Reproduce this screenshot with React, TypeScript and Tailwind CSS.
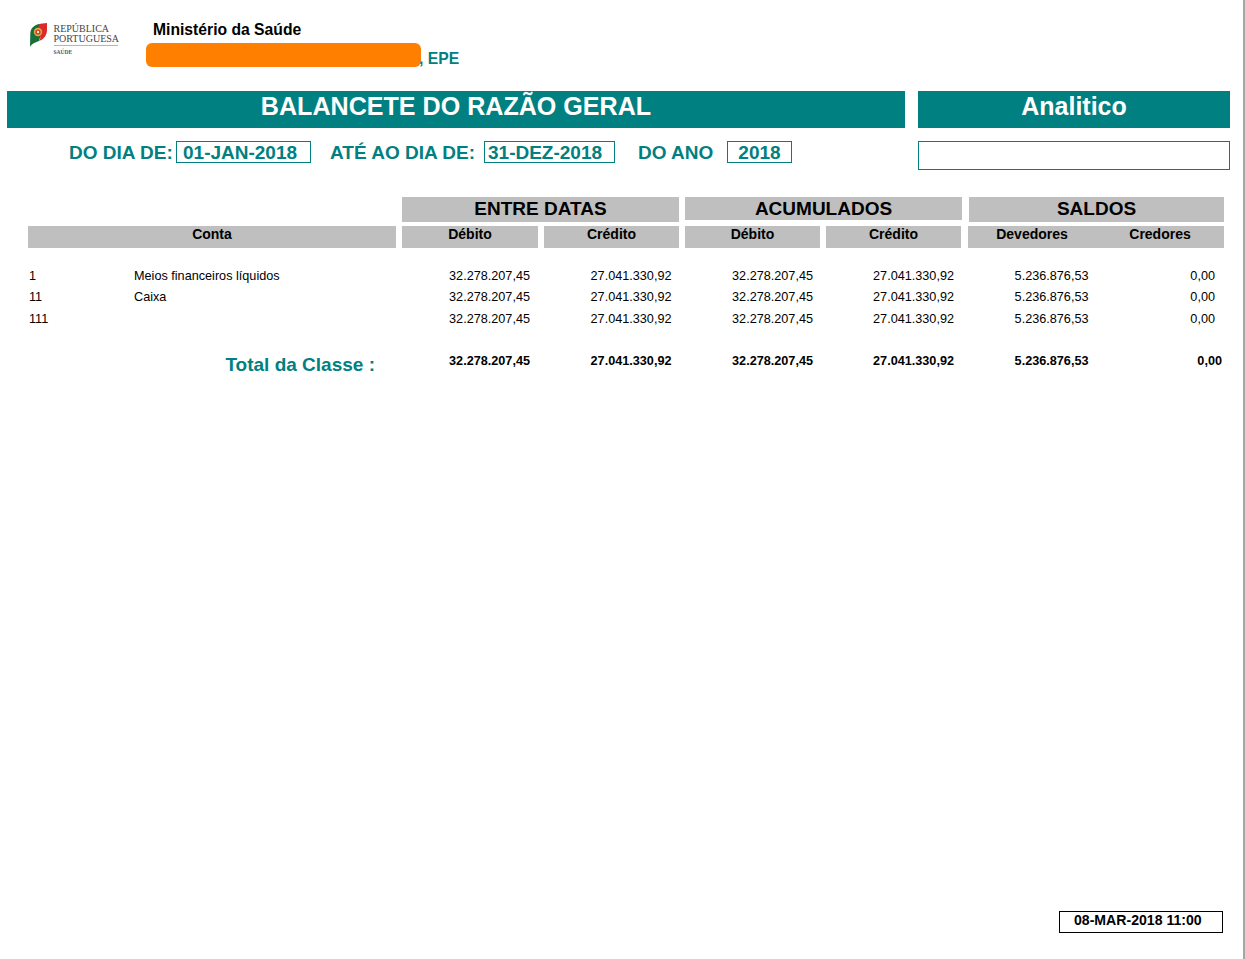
const ROWS = [
  { code: "1", name: "Meios financeiros líquidos" },
  { code: "11", name: "Caixa" },
  { code: "111", name: "" },
];

const VALUES = [
  { value: "32.278.207,45", width: "w-[128px]" },
  { value: "27.041.330,92", width: "w-[141.5px]" },
  { value: "32.278.207,45", width: "w-[141.5px]" },
  { value: "27.041.330,92", width: "w-[141px]" },
  { value: "5.236.876,53", width: "w-[134.5px]" },
];

function Logo() {
  return (
    <div className="ml-[30px] mt-[23px] flex w-[88px] items-start">
      <svg width="17" height="24" viewBox="0 0 17 24" className="shrink-0">
        <path d="M9 1C4 2.2 .5 5.5 .3 10.5L0 24C1.5 21.5 3.5 20 9 18C9 18 12 12 9 1Z" fill="#17703a" />
        <path d="M17 0C13.5 .2 11 .5 9 1C8 6 8.5 9 9.5 12C11 15 10 16.5 9 18C13.5 16.5 17 12.5 17 7Z" fill="#dc2a2a" />
        <circle cx="8" cy="9" r="4.2" fill="#e3a93a" />
        <circle cx="8" cy="9" r="2.6" fill="#c9362e" />
        <circle cx="8" cy="9" r="1.2" fill="#f4f1e4" />
      </svg>
      <div className="ml-[6.5px] font-['Liberation_Serif',serif] text-[#444444]">
        <div className="mt-[1px] text-[10px] leading-[10px] whitespace-nowrap">REPÚBLICA</div>
        <div className="text-[10px] leading-[10px] whitespace-nowrap">PORTUGUESA</div>
        <div className="mt-[1px] h-px w-[64px] bg-[#b5b5b5]" />
        <div className="mt-[3px] text-[5.5px] leading-[6px] font-bold whitespace-nowrap text-[#555555]">SAÚDE</div>
      </div>
    </div>
  );
}

function DateBox({ value, className }: { value: string; className: string }) {
  return (
    <div className={`h-[22px] border border-[#008080] text-[19px] leading-[21px] font-bold text-[#008080] whitespace-nowrap ${className}`}>
      {value}
    </div>
  );
}

function Label({ text, className }: { text: string; className: string }) {
  return (
    <div className={`text-[19px] leading-[24px] font-bold text-[#008080] whitespace-nowrap ${className}`}>
      {text}
    </div>
  );
}

function SubHead({ text, className }: { text: string; className: string }) {
  return (
    <div className={`h-[22px] bg-[#bfbfbf] text-center text-[14px] leading-[16px] font-bold text-black ${className}`}>
      {text}
    </div>
  );
}

export default function App() {
  return (
    <div className="flex h-[959px] w-[1245px] flex-col overflow-hidden border-r-2 border-[#a6a6a6] bg-white font-['Liberation_Sans',Arial,sans-serif] text-black">
      {/* cabecalho */}
      <div className="flex h-[91px] shrink-0">
        <Logo />
        <div className="ml-[28px] flex flex-col">
          <div className="ml-[7px] mt-[21px] text-[15.7px] leading-[18px] font-bold">Ministério da Saúde</div>
          <div className="mt-[4px] flex items-start">
            <div className="h-[24px] w-[275px] rounded-[6px] bg-[#ff8000]" />
            <div className="mt-[7px] -ml-[2px] text-[15.7px] leading-[18px] font-bold text-[#008080] whitespace-pre">, EPE</div>
          </div>
        </div>
      </div>

      <div className="flex h-[37px] shrink-0 pl-[7px]">
        <div className="w-[898px] bg-[#008080] text-center text-[25.1px] leading-[30px] font-bold text-white">
          BALANCETE DO RAZÃO GERAL
        </div>
        <div className="ml-[13px] w-[312px] bg-[#008080] text-center text-[25px] leading-[31px] font-bold text-white">
          Analitico
        </div>
      </div>

      <div className="mt-[13px] flex h-[29px] shrink-0 items-start">
        <Label text="DO DIA DE:" className="ml-[69px] w-[107px]" />
        <DateBox value="01-JAN-2018" className="w-[135px] pl-[6px]" />
        <Label text="ATÉ AO DIA DE:" className="ml-[19px] w-[154px]" />
        <DateBox value="31-DEZ-2018" className="w-[131px] pl-[3px]" />
        <Label text="DO ANO" className="ml-[23px] w-[89px]" />
        <DateBox value="2018" className="w-[65px] text-center" />
        <div className="ml-[126px] h-[29px] w-[312px] border border-[#008080]" />
      </div>

      {/* tabela */}
      <div className="mt-[27px] flex shrink-0 items-start pl-[402px] text-center text-[19px] leading-[24px] font-bold">
        <div className="h-[25px] w-[277px] bg-[#bfbfbf]">ENTRE DATAS</div>
        <div className="ml-[6px] h-[23px] w-[277px] bg-[#bfbfbf]">ACUMULADOS</div>
        <div className="ml-[7px] h-[25px] w-[255px] bg-[#bfbfbf]">SALDOS</div>
      </div>

      <div className="mt-[4px] flex shrink-0 pl-[28px]">
        <SubHead text="Conta" className="w-[368px]" />
        <SubHead text="Débito" className="ml-[6px] w-[136px]" />
        <SubHead text="Crédito" className="ml-[6px] w-[135px]" />
        <SubHead text="Débito" className="ml-[6px] w-[135px]" />
        <SubHead text="Crédito" className="ml-[6px] w-[135px]" />
        <SubHead text="Devedores" className="ml-[7px] w-[128px]" />
        <SubHead text="Credores" className="w-[128px]" />
      </div>

      <div className="mt-[17.5px] shrink-0 text-[12.67px] leading-[21.5px]">
        {ROWS.map((row) => (
          <div key={row.code} className="flex h-[21.5px] pl-[29px]">
            <div className="w-[105px]">{row.code}</div>
            <div className="w-[268px]">{row.name}</div>
            {VALUES.map((cell, i) => (
              <div key={i} className={`text-right ${cell.width}`}>{cell.value}</div>
            ))}
            <div className="w-[126.5px] text-right">0,00</div>
          </div>
        ))}
      </div>

      <div className="mt-[23px] flex shrink-0 items-start">
        <div className="w-[375px] pt-[1px] text-right text-[19px] leading-[22px] font-bold text-[#008080]">
          Total da Classe :
        </div>
        <div className="flex pl-[27px] text-[12.67px] leading-[16px] font-bold">
          {VALUES.map((cell, i) => (
            <div key={i} className={`text-right ${cell.width}`}>{cell.value}</div>
          ))}
          <div className="w-[133.5px] text-right">0,00</div>
        </div>
      </div>

      <div className="mt-auto mb-[26px] mr-[20px] h-[22px] w-[164px] self-end border border-black pl-[14px] text-[14.1px] leading-[16px] font-bold whitespace-nowrap">
        08-MAR-2018 11:00
      </div>
    </div>
  );
}
